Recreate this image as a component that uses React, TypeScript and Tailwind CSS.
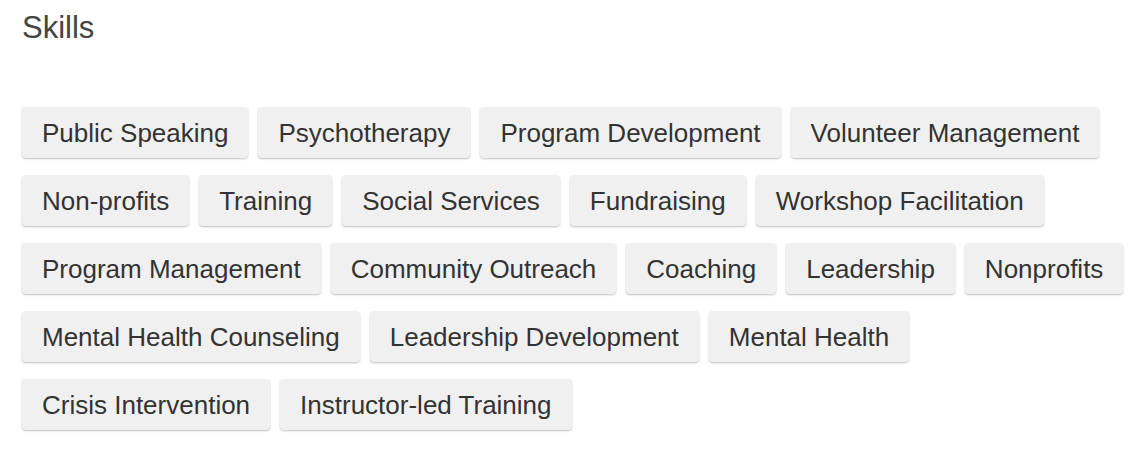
const skills = [
  "Public Speaking",
  "Psychotherapy",
  "Program Development",
  "Volunteer Management",
  "Non-profits",
  "Training",
  "Social Services",
  "Fundraising",
  "Workshop Facilitation",
  "Program Management",
  "Community Outreach",
  "Coaching",
  "Leadership",
  "Nonprofits",
  "Mental Health Counseling",
  "Leadership Development",
  "Mental Health",
  "Crisis Intervention",
  "Instructor-led Training",
];

export default function App() {
  return (
    <div className="min-h-[452px] bg-white px-[22px] pt-[9px] font-['Liberation_Sans',Arial,sans-serif]">
      <h2 className="text-[31px] leading-[38px] text-[#444]">Skills</h2>
      <ul className="mt-[60px] flex flex-wrap gap-x-[10px] gap-y-[17px]">
        {skills.map((s) => (
          <li
            key={s}
            className="rounded-[4px] bg-[#f0f0f0] px-[20px] pt-[13px] pb-[11px] text-[26px] leading-[27px] text-[#333] shadow-[0_1px_2px_rgba(0,0,0,0.25)]"
          >
            {s}
          </li>
        ))}
      </ul>
    </div>
  );
}
